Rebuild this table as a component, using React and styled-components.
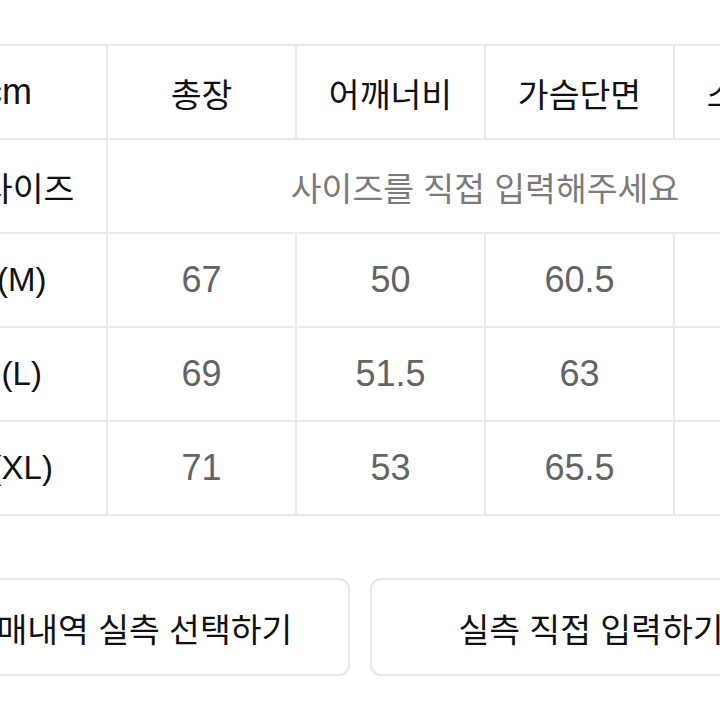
import React from 'react'
import styled, { createGlobalStyle } from 'styled-components'

const GlobalStyle = createGlobalStyle`
  html, body {
    margin: 0;
    padding: 0;
    background: #fff;
    overflow: hidden;
  }
  body {
    font-family: "Liberation Sans", "Noto Sans CJK KR", sans-serif;
  }
`

const Page = styled.div`
  width: 720px;
  height: 720px;
  overflow: hidden;
  padding-top: 44px;
  box-sizing: border-box;
`

const Inner = styled.div`
  margin-left: -92px;
  width: 1000px;
`

const Grid = styled.div`
  display: grid;
  grid-template-columns: 196px repeat(4, 187px);
  grid-auto-rows: 92px;
  gap: 2px;
  background: #e9e9e9;
  border: 2px solid #e9e9e9;
  width: max-content;
`

const Cell = styled.div`
  background: #fff;
  display: flex;
  align-items: center;
  justify-content: center;
  white-space: pre;
  color: ${p => (p.$muted ? '#646464' : '#111')};
  font-size: ${p => p.$size || 33.5}px;
  grid-column: ${p => (p.$span ? `span ${p.$span}` : 'auto')};
`

const Placeholder = styled.span`
  color: #7b7b7b;
`

const Buttons = styled.div`
  display: flex;
  gap: 20px;
  margin-top: 62px;
`

const Button = styled.button`
  width: 442px;
  height: 98px;
  flex: none;
  background: #fff;
  border: 2px solid #e8e8e8;
  border-radius: 11px;
  font-family: inherit;
  font-size: 33.5px;
  color: #111;
  white-space: nowrap;
  padding: 0;
`

const headers = [
  { text: 'cm', size: 36 },
  { text: '총장' },
  { text: '어깨너비' },
  { text: '가슴단면' },
  { text: '소매길이' }
]

const rows = [
  { label: '1 (M)', values: ['67', '50', '60.5', ''] },
  { label: '2 (L)', values: ['69', '51.5', '63', ''] },
  { label: '3 (XL)', values: ['71', '53', '65.5', ''] }
]

export default function App () {
  return (
    <Page>
      <GlobalStyle />
      <Inner>
        <Grid>
          {headers.map(h => <Cell key={h.text} $size={h.size}>{h.text}</Cell>)}
          <Cell>내 사이즈</Cell>
          <Cell $span={4}><Placeholder>사이즈를 직접 입력해주세요</Placeholder></Cell>
          {rows.map(r => (
            <React.Fragment key={r.label}>
              <Cell $size={33}>{r.label}</Cell>
              {r.values.map((v, i) => (
                <Cell key={i} $size={36} $muted>{v}</Cell>
              ))}
            </React.Fragment>
          ))}
        </Grid>
        <Buttons>
          <Button>구매내역 실측 선택하기</Button>
          <Button>실측 직접 입력하기</Button>
        </Buttons>
      </Inner>
    </Page>
  )
}
